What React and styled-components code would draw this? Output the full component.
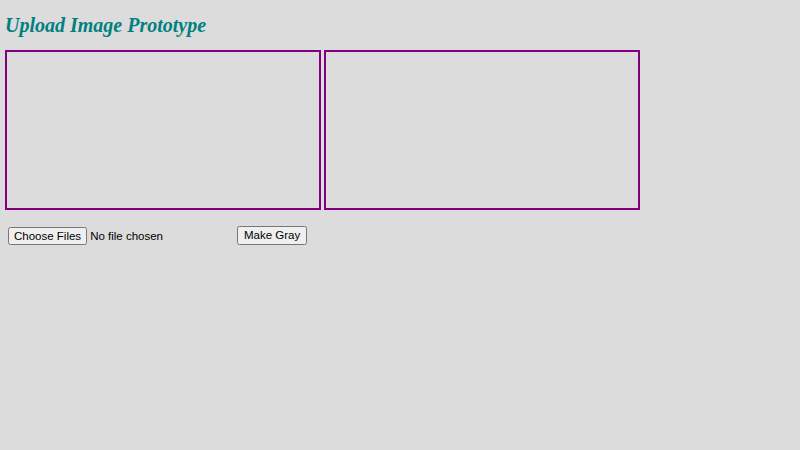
import React from "react";
import styled, { createGlobalStyle } from "styled-components";

const Global = createGlobalStyle`
  html, body { margin: 0; padding: 0; background: #dcdcdc; }
  body { font-family: "Liberation Serif", serif; }
`;

const Page = styled.div`
  padding: 0 5px;
`;

const Title = styled.h2`
  margin: 0;
  padding-top: 13px;
  height: 38px;
  box-sizing: border-box;
  font-family: "Liberation Serif", serif;
  font-style: italic;
  font-weight: bold;
  font-size: 20px;
  line-height: 24px;
  color: #008080;
`;

const Canvases = styled.div`
  display: flex;
  gap: 3px;
  margin-top: 12px;
`;

const Canvas = styled.canvas`
  display: block;
  width: 312px;
  height: 156px;
  border: 2px solid #800080;
`;

const Controls = styled.div`
  display: flex;
  align-items: center;
  margin-top: 16px;
  padding-left: 3px;
  font-family: "Liberation Sans", Arial, sans-serif;
  font-size: 11.5px;
`;

const FileInput = styled.input`
  width: 225px;
  margin: 0;
  font-family: "Liberation Sans", Arial, sans-serif;
  font-size: 11.5px;
  line-height: 13px;

  &::file-selector-button {
    font-family: "Liberation Sans", Arial, sans-serif;
    font-size: 11.5px;
    line-height: 13px;
    padding: 1px 4px;
    margin: 0 3px 0 0;
  }
`;

const Button = styled.button`
  margin: 0 0 0 4px;
  padding: 1px 5px;
  font-family: "Liberation Sans", Arial, sans-serif;
  font-size: 11.5px;
  line-height: 13px;
`;

export default function App() {
  return (
    <>
      <Global />
      <Page>
        <Title>Upload Image Prototype</Title>
        <Canvases>
          <Canvas width={300} height={150} />
          <Canvas width={300} height={150} />
        </Canvases>
        <Controls>
          <FileInput type="file" multiple accept="image/*" />
          <Button>Make Gray</Button>
        </Controls>
      </Page>
    </>
  );
}
